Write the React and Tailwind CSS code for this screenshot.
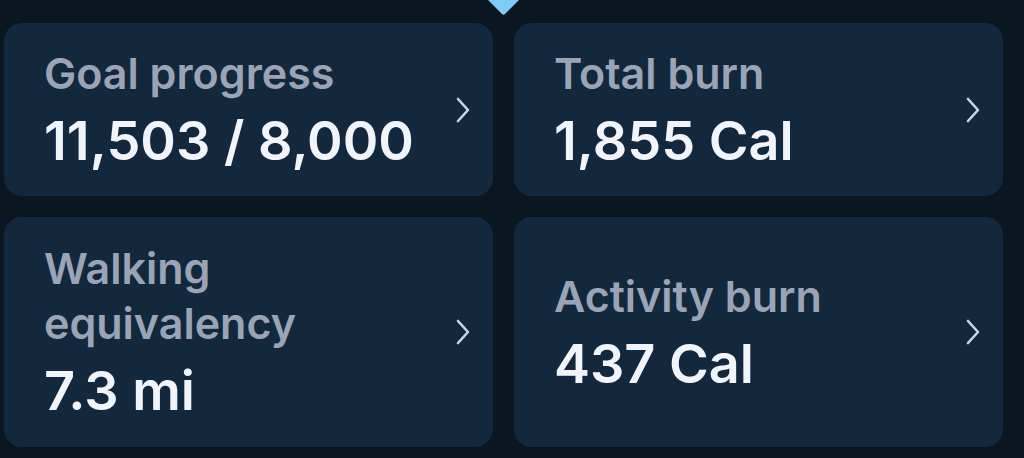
import React from 'react';

const stats = [
  { label: ['Goal progress'], value: '11,503 / 8,000' },
  { label: ['Total burn'], value: '1,855 Cal' },
  { label: ['Walking', 'equivalency'], value: '7.3 mi' },
  { label: ['Activity burn'], value: '437 Cal' },
];

function Chevron() {
  return (
    <svg width="16" height="28" viewBox="0 0 16 28" fill="none" className="shrink-0">
      <polyline
        points="3,3 13,14 3,25"
        stroke="#c8d5ea"
        strokeWidth="2.6"
        strokeLinecap="round"
        strokeLinejoin="round"
      />
    </svg>
  );
}

function StatCard({ label, value }) {
  return (
    <div className="flex items-center justify-between rounded-[18px] bg-[#14283d] pl-[40px] pr-[22px]">
      <div className="flex flex-col">
        {label.map((line) => (
          <span key={line} className="text-[43px] leading-[55px] font-semibold text-[#9ba4b6]">
            {line}
          </span>
        ))}
        <span className="mt-[8px] text-[54px] leading-[64px] font-semibold text-[#f1f5fa]">
          {value}
        </span>
      </div>
      <Chevron />
    </div>
  );
}

export default function App() {
  return (
    <div
      className="relative h-[458px] w-[1024px] overflow-hidden bg-[#0c1621]"
      style={{ fontFamily: 'Inter, "Noto Sans", sans-serif' }}
    >
      {/* selected-day marker */}
      <svg className="absolute left-[488px] top-0" width="31" height="16" viewBox="0 0 31 16">
        <path d="M0 0 L31 0 L17 14 Q15.5 15.5 14 14 Z" fill="#7fcaf7" />
      </svg>
      <div className="grid grid-cols-2 grid-rows-[173px_230px] gap-[21px] pl-[4px] pr-[21px] pt-[23px]">
        {stats.map((s) => (
          <StatCard key={s.value} label={s.label} value={s.value} />
        ))}
      </div>
    </div>
  );
}
